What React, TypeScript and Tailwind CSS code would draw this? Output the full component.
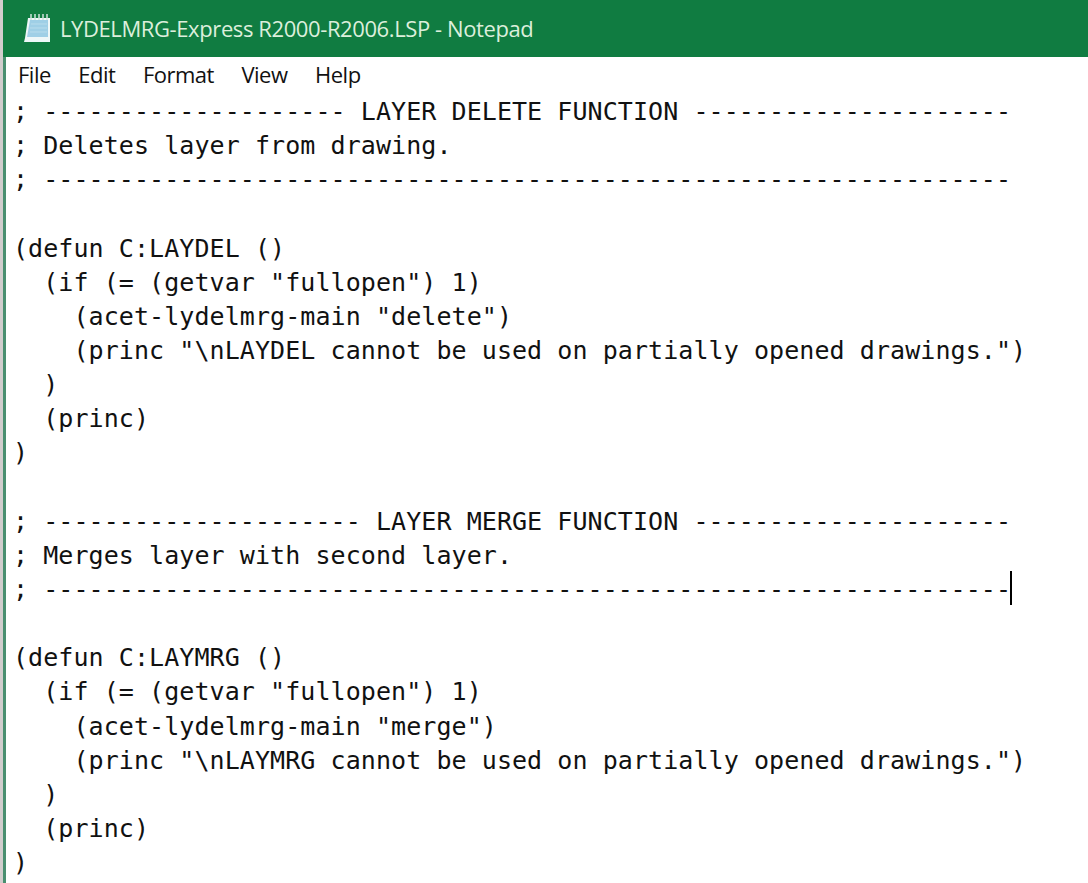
const lines = [
  "; -------------------- LAYER DELETE FUNCTION ---------------------",
  "; Deletes layer from drawing.",
  "; ----------------------------------------------------------------",
  "",
  "(defun C:LAYDEL ()",
  '  (if (= (getvar "fullopen") 1)',
  '    (acet-lydelmrg-main "delete")',
  '    (princ "\\nLAYDEL cannot be used on partially opened drawings.")',
  "  )",
  "  (princ)",
  ")",
  "",
  "; --------------------- LAYER MERGE FUNCTION ---------------------",
  "; Merges layer with second layer.",
  "; ----------------------------------------------------------------",
  "",
  "(defun C:LAYMRG ()",
  '  (if (= (getvar "fullopen") 1)',
  '    (acet-lydelmrg-main "merge")',
  '    (princ "\\nLAYMRG cannot be used on partially opened drawings.")',
  "  )",
  "  (princ)",
  ")",
];

const menus = ["File", "Edit", "Format", "View", "Help"];

function NotepadIcon() {
  return (
    <svg width="28" height="28" viewBox="0 0 28 28" className="mb-[2px] shrink-0">
      <path d="M5 4h22v24H1l1-4z" fill="#eef7f8" />
      <path d="M7 6h18v17H4z" fill="#9fcfe6" />
      <path d="M8 10h16M7 14h17M7 18h17" stroke="#b8dcec" strokeWidth="1" />
      <path d="M8 0v6M12 0v6M16 0v6M20 0v6M24 0v6" stroke="#cfe2dc" strokeWidth="1.5" />
    </svg>
  );
}

export default function App() {
  return (
    <div className="flex h-[883px] w-[1088px] overflow-hidden bg-white">
      <div className="w-[3px] shrink-0 bg-[#d2cdcd]" />
      <div className="min-w-0 flex-1">
        <div className="flex h-[57px] items-center gap-[9px] bg-[#107c41] pl-[20px] font-['Open_Sans',sans-serif] text-[22px] text-[#dcefdc]">
          <NotepadIcon />
          <span className="tracking-[-0.4px]">LYDELMRG-Express R2000-R2006.LSP - Notepad</span>
        </div>
        <div className="h-[826px] border-l-[3px] border-[#4a8f70]">
          <div className="flex h-[36px] items-center gap-[27.5px] pb-[2px] pl-[12px] font-['Open_Sans',sans-serif] text-[22px] text-[#111]">
            {menus.map((m) => (
              <span key={m} className="tracking-[-0.5px]">{m}</span>
            ))}
          </div>
          <div className="relative pl-[7px] pt-[2px] font-['DejaVu_Sans_Mono',monospace] text-[25px] leading-[34.15px] tracking-[0.07px] text-[#111]">
            {lines.map((line, i) => (
              <div key={i} className="h-[34.15px] whitespace-pre">{line}</div>
            ))}
            <div className="absolute left-[1004px] top-[478px] h-[34px] w-[2px] bg-black" />
          </div>
        </div>
      </div>
    </div>
  );
}
